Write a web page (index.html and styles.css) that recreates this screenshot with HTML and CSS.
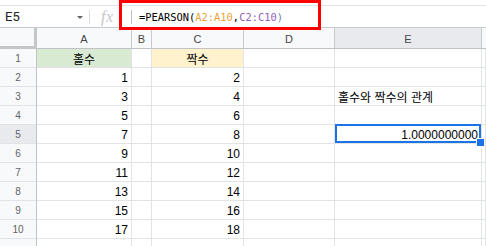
FILE: index.html
```html
<!DOCTYPE html>
<html lang="ko">
<head>
<meta charset="utf-8">
<link rel="stylesheet" href="styles.css">
</head>
<body>
<div class="top-strip"></div>
<div class="fbar">
  <div class="namebox"><span class="name">E5</span><span class="caret"></span></div>
  <div class="sep"></div>
  <div class="fx">fx</div>
  <div class="sep sep2"></div>
  <div class="formula">=PEARSON(<span class="r1">A2:A10</span>,<span class="r2">C2:C10</span><span class="par">)</span></div>
  <div class="annot"></div>
</div>
<div class="grid">
  <div class="corner"></div>
  <div class="ch">A</div><div class="ch">B</div><div class="ch">C</div><div class="ch">D</div><div class="ch ch-sel">E</div><div class="ch ch-last"></div>

  <div class="rh">1</div><div class="c green ctr">홀수</div><div class="c"></div><div class="c yellow ctr">짝수</div><div class="c"></div><div class="c"></div><div class="c"></div>
  <div class="rh">2</div><div class="c num">1</div><div class="c"></div><div class="c num">2</div><div class="c"></div><div class="c"></div><div class="c"></div>
  <div class="rh">3</div><div class="c num">3</div><div class="c"></div><div class="c num">4</div><div class="c"></div><div class="c txt">홀수와 짝수의 관계</div><div class="c"></div>
  <div class="rh">4</div><div class="c num">5</div><div class="c"></div><div class="c num">6</div><div class="c"></div><div class="c"></div><div class="c"></div>
  <div class="rh rh-sel">5</div><div class="c num">7</div><div class="c"></div><div class="c num">8</div><div class="c"></div><div class="c num sel">1.0000000000</div><div class="c"></div>
  <div class="rh">6</div><div class="c num">9</div><div class="c"></div><div class="c num">10</div><div class="c"></div><div class="c"></div><div class="c"></div>
  <div class="rh">7</div><div class="c num">11</div><div class="c"></div><div class="c num">12</div><div class="c"></div><div class="c"></div><div class="c"></div>
  <div class="rh">8</div><div class="c num">13</div><div class="c"></div><div class="c num">14</div><div class="c"></div><div class="c"></div><div class="c"></div>
  <div class="rh">9</div><div class="c num">15</div><div class="c"></div><div class="c num">16</div><div class="c"></div><div class="c"></div><div class="c"></div>
  <div class="rh">10</div><div class="c num">17</div><div class="c"></div><div class="c num">18</div><div class="c"></div><div class="c"></div><div class="c"></div>
  <div class="rh"></div><div class="c"></div><div class="c"></div><div class="c"></div><div class="c"></div><div class="c"></div><div class="c"></div>
</div>
</body>
</html>
```

FILE: styles.css
```css
* { box-sizing: border-box; }
html, body {
  margin: 0;
  padding: 0;
  background: #fff;
  width: 486px;
  height: 246px;
  overflow: hidden;
  font-family: "Liberation Sans", Arial, sans-serif;
}
.top-strip {
  height: 5px;
  background: #fff;
}
.fbar {
  position: relative;
  display: flex;
  align-items: center;
  height: 23px;
  border-top: 1px solid #e1e3e6;
  border-bottom: 1px solid #c8cacd;
}
.namebox {
  display: flex;
  align-items: center;
  width: 89px;
  padding-left: 5px;
  height: 100%;
}
.name {
  font-family: "Roboto", "Liberation Sans", sans-serif;
  font-size: 13px;
  color: #202124;
  flex: 1;
}
.caret {
  width: 0;
  height: 0;
  border-left: 3px solid transparent;
  border-right: 3px solid transparent;
  border-top: 3px solid #5f6368;
  margin-right: 6px;
  margin-top: 2px;
}
.sep {
  width: 1px;
  height: 14px;
  background: #dadce0;
}
.fx {
  width: 41px;
  padding-left: 11px;
  font-family: "Liberation Serif", serif;
  font-style: italic;
  font-size: 16px;
  color: #c4c6c9;
  letter-spacing: 0.5px;
}
.sep2 { background: #bdc1c6; }
.formula {
  padding-left: 7px;
  font-family: "DejaVu Sans Mono", monospace;
  font-size: 10.4px;
  color: #000;
  white-space: nowrap;
}
.r1 { color: #e8a33a; }
.r2 { color: #8f5fb8; }
.par { color: #6a7fb0; }
.annot {
  position: absolute;
  left: 119px;
  top: -6px;
  width: 202px;
  height: 30px;
  border: 3.5px solid #ff0000;
}

.grid {
  display: grid;
  grid-template-columns: 37px 95px 20px 92px 91px 147px 1fr;
  grid-template-rows: 21px;
  grid-auto-rows: 19px;
}
.corner {
  background: #f8f9fa;
  border-right: 3px solid #c4c7c9;
  border-bottom: 3px solid #c4c7c9;
}
.ch {
  background: #f8f9fa;
  border-right: 1px solid #c9cbce;
  border-bottom: 1px solid #c0c2c5;
  font-size: 11px;
  color: #444746;
  display: flex;
  align-items: center;
  justify-content: center;
  padding-top: 1px;
}
.ch-sel { background: #e8eaed; }
.ch-last { border-right: none; }
.rh {
  background: #f8f9fa;
  border-right: 1px solid #c0c2c5;
  border-bottom: 1px solid #e1e3e6;
  font-size: 10px;
  color: #5f6368;
  display: flex;
  align-items: center;
  justify-content: center;
  padding-top: 1px;
}
.rh-sel { background: #e8eaed; }
.c {
  border-right: 1px solid #e2e3e3;
  border-bottom: 1px solid #e2e3e3;
  font-size: 12px;
  color: #000;
  display: flex;
  align-items: center;
  padding-top: 1px;
  white-space: nowrap;
}
.num {
  justify-content: flex-end;
  padding-right: 3px;
}
.ctr {
  justify-content: center;
  font-family: "Noto Sans CJK KR", sans-serif;
  font-size: 12px;
}
.txt {
  padding-left: 3px;
  font-family: "Noto Sans CJK KR", sans-serif;
  font-size: 12px;
}
.green { background: #d9ead3; }
.yellow { background: #fff2cc; }
.sel {
  position: relative;
}
.sel::before {
  content: "";
  position: absolute;
  left: 0;
  top: -1px;
  right: 0;
  bottom: 0;
  border: 2px solid #1a73e8;
}
.sel::after {
  content: "";
  position: absolute;
  right: -4px;
  bottom: -4px;
  width: 7px;
  height: 7px;
  background: #1a73e8;
  border: 1px solid #fff;
}
```
